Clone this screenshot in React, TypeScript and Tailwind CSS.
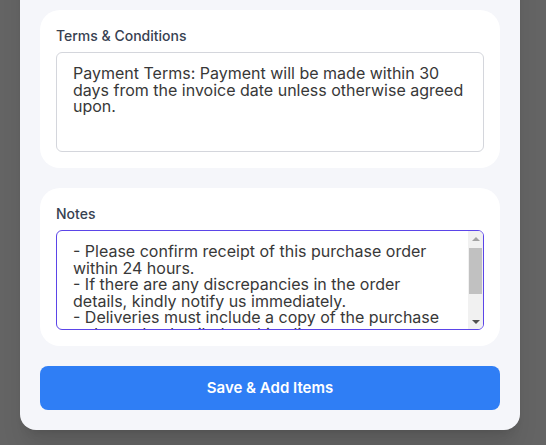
const terms =
  'Payment Terms: Payment will be made within 30 days from the invoice date unless otherwise agreed upon.'

const notes = [
  '- Please confirm receipt of this purchase order within 24 hours.',
  '- If there are any discrepancies in the order details, kindly notify us immediately.',
  '- Deliveries must include a copy of the purchase order and a detailed packing list.',
  '- Invoices should reference the purchase order number.',
].join('\n')

// classic scrollbar look, drawn since the headless page hides native ones
function FakeScrollbar() {
  return (
    <div className="absolute top-px right-px bottom-px w-[15px] bg-[#f1f1f1] rounded-r-[5px] flex flex-col items-center">
      <div className="h-[15px] flex items-center justify-center">
        <div className="w-0 h-0 border-l-[4px] border-r-[4px] border-b-[4px] border-l-transparent border-r-transparent border-b-[#a3a3a3]" />
      </div>
      <div className="mt-[2px] w-[13px] h-[46px] bg-[#c1c1c1]" />
      <div className="flex-1" />
      <div className="h-[15px] flex items-center justify-center">
        <div className="w-0 h-0 border-l-[4px] border-r-[4px] border-t-[4px] border-l-transparent border-r-transparent border-t-[#505050]" />
      </div>
    </div>
  )
}

function Field({ label, value, active = false }: { label: string; value: string; active?: boolean }) {
  return (
    <div className="bg-white rounded-[20px] p-4">
      <label className="block text-sm font-medium text-[#374151] mb-1.5">{label}</label>
      <div className="relative">
        <textarea
          defaultValue={value}
          className={
            active
              ? "block w-full h-[100px] resize-none overflow-hidden rounded-md border border-[#5b45e8] pl-4 pr-[31px] py-3 font-['Inter',sans-serif] text-[16px] leading-[16.5px] text-[#383838] outline-none"
              : "block w-full h-[100px] resize-none overflow-hidden rounded-md border border-[#d4d6dc] px-4 py-3 font-['Inter',sans-serif] text-[16px] leading-[16.5px] text-[#383838] outline-none"
          }
        />
        {active && <FakeScrollbar />}
      </div>
    </div>
  )
}

export default function App() {
  return (
    <div className="h-screen overflow-hidden bg-[#646464] flex flex-col justify-end px-5 pb-[15px] font-['Inter',sans-serif]">
      <div className="shrink-0 w-[500px] bg-[#f5f6fa] rounded-2xl shadow-xl p-5 flex flex-col gap-5">
        {/* earlier section, scrolled out of view */}
        <div className="bg-white rounded-[20px] h-[240px]" />

        <Field label="Terms & Conditions" value={terms} />
        <Field label="Notes" value={notes} active />

        <button className="h-11 w-full rounded-lg bg-[#2f7ef5] text-white text-[15px] font-semibold">
          Save &amp; Add Items
        </button>
      </div>
    </div>
  )
}
